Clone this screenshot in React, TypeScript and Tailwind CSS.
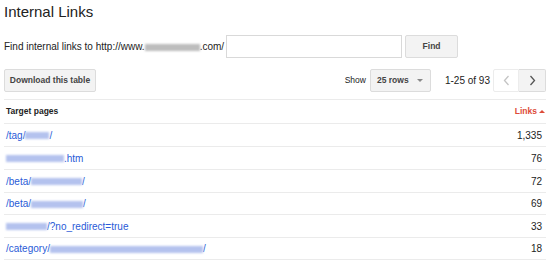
import React from "react";

const rows: { pre: string; blur: number; post: string; links: string; h: string }[] = [
  { pre: "/tag/", blur: 24, post: "/", links: "1,335", h: "h-[23px]" },
  { pre: "", blur: 58, post: ".htm", links: "76", h: "h-[23px]" },
  { pre: "/beta/", blur: 51, post: "/", links: "72", h: "h-[23px]" },
  { pre: "/beta/", blur: 52, post: "/", links: "69", h: "h-[22px]" },
  { pre: "", blur: 41, post: "/?no_redirect=true", links: "33", h: "h-[23px]" },
  { pre: "/category/", blur: 153, post: "/", links: "18", h: "h-[22px]" },
];

function Blur({ w, gray }: { w: number; gray?: boolean }) {
  return (
    <span
      className={`inline-block h-[7px] align-middle blur-[1px] ${gray ? "bg-[#bdbdbd]" : "bg-[#b4c2ee]"}`}
      style={{ width: w }}
    />
  );
}

export default function App() {
  return (
    <div className="w-[550px] h-[263px] overflow-hidden bg-white px-[4px] font-['Liberation_Sans',Arial,sans-serif] text-[#222]">
      <h1 className="pt-[3px] text-[15px] leading-[18px]">Internal Links</h1>

      <div className="mt-[14px] flex items-center h-[23px]">
        <span className="text-[10px]">
          Find internal links to http://www.<Blur w={55} gray />.com/
        </span>
        <div className="ml-[2px] h-[23px] w-[176px] border border-[#d9d9d9] bg-white" />
        <button className="ml-[3px] h-[23px] w-[53px] rounded-[2px] border border-[#dcdcdc] bg-[#f3f3f3] text-[8.5px] font-bold text-[#444]">
          Find
        </button>
      </div>

      <div className="mt-[11px] flex items-center h-[23px]">
        <button className="h-[23px] w-[92px] whitespace-nowrap rounded-[2px] border border-[#dcdcdc] bg-[#f3f3f3] text-[8.5px] font-bold text-[#444]">
          Download this table
        </button>
        <span className="ml-auto text-[8.5px] text-[#222]">Show</span>
        <div className="ml-[4px] flex h-[23px] w-[61px] items-center rounded-[2px] border border-[#dcdcdc] bg-[#f3f3f3] pl-[6px] pr-[7px]">
          <span className="text-[8.5px] font-bold text-[#444]">25 rows</span>
          <span className="ml-auto h-0 w-0 border-x-[3px] border-t-[3px] border-x-transparent border-t-[#888]" />
        </div>
        <span className="ml-[14px] text-[10px]">1-25 of 93</span>
        <div className="ml-[3px] flex h-[23px]">
          <div className="flex w-[26px] items-center justify-center rounded-l-[2px] border border-[#ececec] bg-white">
            <svg width="7" height="11" viewBox="0 0 7 11"><path d="M5.5 1 L1.5 5.5 L5.5 10" fill="none" stroke="#c4c4c4" strokeWidth="1.3" /></svg>
          </div>
          <div className="flex w-[27px] items-center justify-center rounded-r-[2px] border border-l-0 border-[#dcdcdc] bg-[#f3f3f3]">
            <svg width="7" height="11" viewBox="0 0 7 11"><path d="M1.5 1 L5.5 5.5 L1.5 10" fill="none" stroke="#555" strokeWidth="1.3" /></svg>
          </div>
        </div>
      </div>

      <div className="mt-[7px] w-[542px]">
        <div className="flex h-[25px] items-center border-y border-[#ebebeb] pl-[2px] pr-[1px]">
          <span className="text-[8.5px] font-bold text-[#222]">Target pages</span>
          <span className="ml-auto flex items-center text-[8.5px] font-bold text-[#dd4b39]">
            Links
            <span className="ml-[2px] h-0 w-0 border-x-[3px] border-b-[3px] border-x-transparent border-b-[#dd4b39]" />
          </span>
        </div>
        {rows.map((r, i) => (
          <div key={i} className={`flex ${r.h} items-center border-b border-[#ebebeb] pl-[2px] pr-[4px] text-[10px]`}>
            <span className="text-[#2a5bd7]">
              {r.pre}
              <Blur w={r.blur} />
              {r.post}
            </span>
            <span className="ml-auto">{r.links}</span>
          </div>
        ))}
      </div>
    </div>
  );
}
